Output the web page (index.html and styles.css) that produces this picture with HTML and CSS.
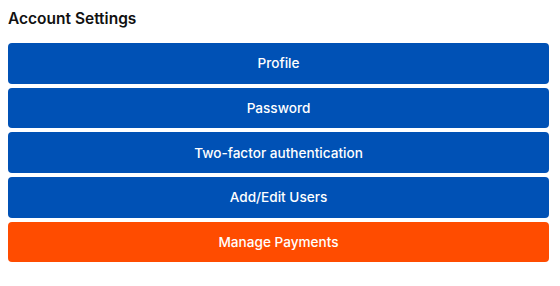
FILE: index.html
```html
<!DOCTYPE html>
<html lang="en">
<head>
  <meta charset="UTF-8">
  <title>Account Settings</title>
  <link rel="stylesheet" href="styles.css">
</head>
<body>
  <h2 class="title">Account Settings</h2>
  <div class="menu">
    <button class="menu-btn">Profile</button>
    <button class="menu-btn">Password</button>
    <button class="menu-btn">Two-factor authentication</button>
    <button class="menu-btn">Add/Edit Users</button>
    <button class="menu-btn payments">Manage Payments</button>
  </div>
</body>
</html>
```

FILE: styles.css
```css
body {
  margin: 8px;
  font-family: Inter, "Noto Sans", sans-serif;
  background: #ffffff;
  color: #111;
}
.title {
  font-size: 15.5px;
  font-weight: 600;
  margin: 0 0 16px 0;
  padding-top: 3px;
  line-height: 16px;
}
.menu {
  display: flex;
  flex-direction: column;
  gap: 4px;
  width: 541px;
}
.menu-btn {
  height: 40.7px;
  border: none;
  border-radius: 4px;
  background-color: #0051b5;
  color: #ffffff;
  font-family: Inter, "Noto Sans", sans-serif;
  font-size: 13.6px;
  font-weight: 500;
  cursor: pointer;
}
.payments {
  background-color: #ff4c00;
}
```
